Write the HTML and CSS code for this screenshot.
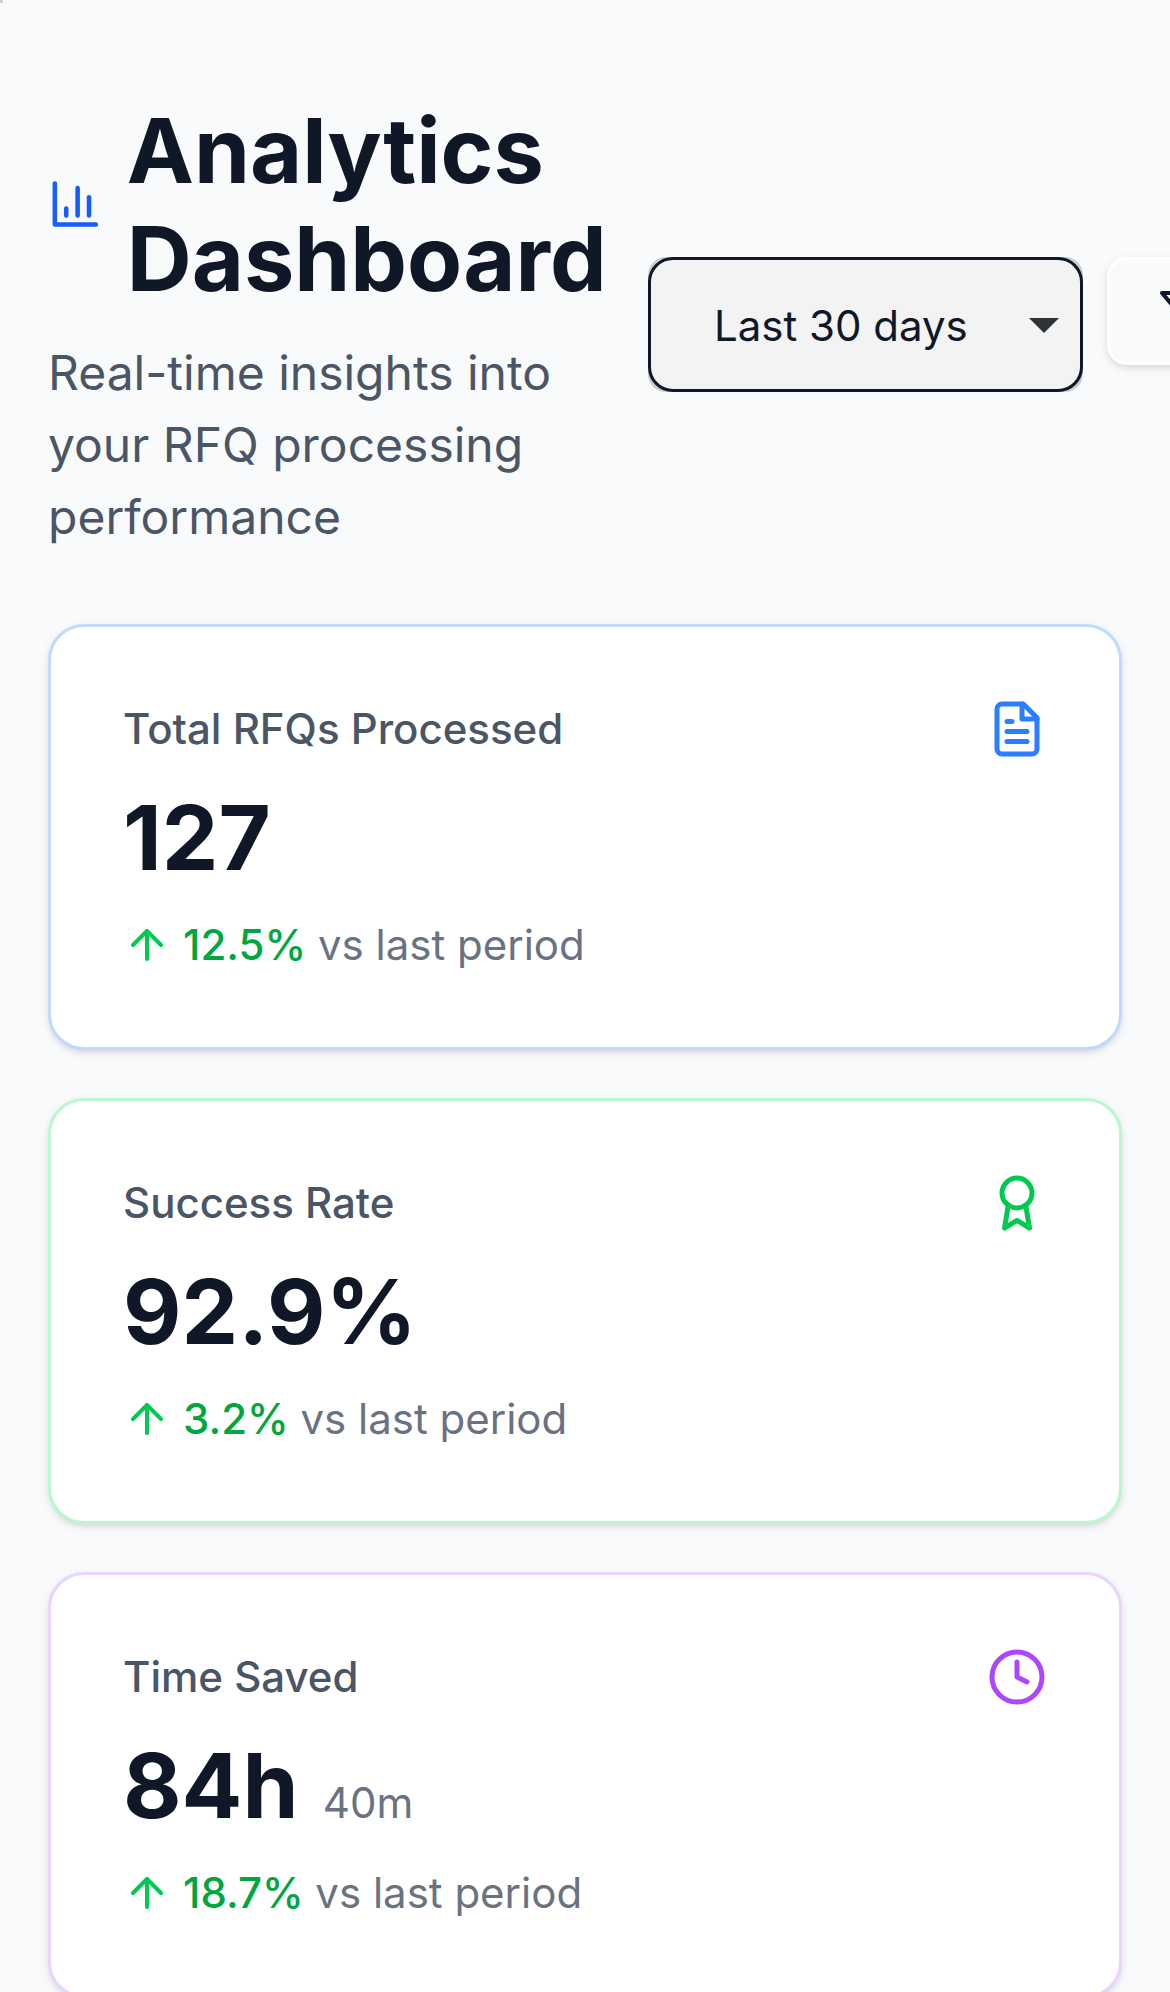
FILE: index.html
```html
<!DOCTYPE html>
<html lang="en">
<head>
<meta charset="utf-8">
<title>Analytics Dashboard</title>
<link rel="stylesheet" href="styles.css">
</head>
<body>
<span class="corner-mark"></span>
<main class="page">
  <header class="header">
    <div class="intro">
      <div class="title-row">
        <svg class="title-icon icon" viewBox="0 0 24 24"><path d="M3 3v18h18"/><path d="M18 17V9"/><path d="M13 17V5"/><path d="M8 17v-3"/></svg>
        <h1 class="title">Analytics Dashboard</h1>
      </div>
      <p class="subtitle">Real-time insights into your RFQ processing performance</p>
    </div>
    <div class="controls">
      <div class="period">
        <div class="period-box">
          <span class="period-label">Last 30 days</span>
          <svg class="period-caret" viewBox="0 0 30 15"><path d="M0 0h30L15 15z"/></svg>
        </div>
      </div>
      <button class="filter" aria-label="Filter">
        <svg class="filter-icon icon" viewBox="0 0 24 24"><path d="M22 3H2l8 9.46V19l4 2v-8.54z"/></svg>
      </button>
    </div>
  </header>
  <section class="cards">
    <article class="card card-blue">
      <div class="card-head">
        <span class="card-label">Total RFQs Processed</span>
        <svg class="card-icon icon" viewBox="0 0 24 24"><path d="M14.5 2H6a2 2 0 0 0-2 2v16a2 2 0 0 0 2 2h12a2 2 0 0 0 2-2V7.5z"/><path d="M14 2v6h6"/><path d="M16 13H8"/><path d="M16 17H8"/><path d="M10 9H8"/></svg>
      </div>
      <div class="card-value">127</div>
      <div class="trend">
        <svg class="trend-icon icon" viewBox="0 0 24 24"><path d="m5 12 7-7 7 7"/><path d="M12 19V5"/></svg>
        <span class="trend-value">12.5%</span>
        <span class="trend-note">vs last period</span>
      </div>
    </article>
    <article class="card card-green">
      <div class="card-head">
        <span class="card-label">Success Rate</span>
        <svg class="card-icon icon" viewBox="0 0 24 24"><circle cx="12" cy="8" r="6"/><path d="M15.477 12.89 17 22l-5-3-5 3 1.523-9.11"/></svg>
      </div>
      <div class="card-value">92.9%</div>
      <div class="trend">
        <svg class="trend-icon icon" viewBox="0 0 24 24"><path d="m5 12 7-7 7 7"/><path d="M12 19V5"/></svg>
        <span class="trend-value">3.2%</span>
        <span class="trend-note">vs last period</span>
      </div>
    </article>
    <article class="card card-purple">
      <div class="card-head">
        <span class="card-label">Time Saved</span>
        <svg class="card-icon icon" viewBox="0 0 24 24"><circle cx="12" cy="12" r="10"/><path d="M12 6v6l4 2"/></svg>
      </div>
      <div class="card-value">84h <span class="card-unit">40m</span></div>
      <div class="trend">
        <svg class="trend-icon icon" viewBox="0 0 24 24"><path d="m5 12 7-7 7 7"/><path d="M12 19V5"/></svg>
        <span class="trend-value">18.7%</span>
        <span class="trend-note">vs last period</span>
      </div>
    </article>
  </section>
</main>
</body>
</html>
```
FILE: styles.css
```css
* { box-sizing: border-box; }

html, body {
  margin: 0;
  height: 1992px;
  overflow: hidden;
}

body {
  background: #f9fafb;
  color: #101828;
  font-family: Inter, "Liberation Sans", sans-serif;
}

.corner-mark {
  position: absolute;
  top: 0;
  left: 0;
  width: 3px;
  height: 3px;
  background: #d1d1d1;
}

.icon {
  display: block;
  flex: none;
  fill: none;
  stroke: currentColor;
  stroke-width: 2;
  stroke-linecap: round;
  stroke-linejoin: round;
}

.page { padding: 96px 48px; }

.header {
  display: flex;
  align-items: center;
  height: 456px;
  margin-bottom: 72px;
}

.intro { flex: none; width: 600px; }

.title-row {
  display: flex;
  align-items: center;
  gap: 24px;
}

.title-icon {
  width: 54.7px;
  height: 96px;
  color: #155dfc;
}

.title {
  margin: 0 0 -1px;
  padding-top: 1px;
  font-size: 90px;
  line-height: 108px;
  font-weight: 700;
}

.subtitle {
  width: 552px;
  margin: 24px 0 0;
  padding-top: 1px;
  color: #4a5565;
  font-size: 48px;
  line-height: 72px;
}

.controls {
  display: flex;
  flex: none;
  align-items: flex-start;
  gap: 24px;
}

.period {
  width: 435px;
  height: 135px;
  border-radius: 18px;
  background: #cbcccd;
}

.period-box {
  display: flex;
  align-items: center;
  justify-content: space-between;
  height: 100%;
  padding: 3px 21px 0 63px;
  border: 3px solid #0f172a;
  border-radius: 25px;
  background: #f3f3f3;
  color: #0f172a;
}

.period-label {
  font-size: 42px;
  line-height: 60px;
}

.period-caret {
  width: 30px;
  height: 15px;
  fill: #2e3436;
}

.filter {
  flex: none;
  width: 150px;
  height: 108px;
  padding: 0 48px;
  border: 3px solid #fff;
  border-radius: 20px;
  background: #f9fafb;
  color: #0f172a;
  box-shadow: 0 3px 9px rgba(0, 0, 0, 0.1), 0 3px 6px -3px rgba(0, 0, 0, 0.1);
}

.filter-icon { width: 48px; height: 48px; }

.cards {
  display: grid;
  gap: 48px;
}

.card {
  height: 426px;
  padding: 72px;
  border: 3px solid;
  border-radius: 36px;
  background: #fff;
  box-shadow: 0 3px 9px rgba(0, 0, 0, 0.1), 0 3px 6px -3px rgba(0, 0, 0, 0.1);
}

.card-blue { border-color: #bedbff; }
.card-green { border-color: #b9f8cf; }
.card-purple { border-color: #e9d4ff; }

.card-head {
  display: flex;
  align-items: center;
  justify-content: space-between;
}

.card-label {
  color: #4a5565;
  font-size: 42px;
  line-height: 60px;
  font-weight: 500;
}

.card-icon { width: 60px; height: 60px; }
.card-blue .card-icon { color: #2b7fff; }
.card-green .card-icon { color: #00c950; }
.card-purple .card-icon { color: #ad46ff; }

.card-value {
  height: 108px;
  margin: 24px 0;
  padding-top: 1px;
  font-size: 90px;
  line-height: 108px;
  font-weight: 700;
}

.card-unit {
  margin-left: 3px;
  color: #6a7282;
  font-size: 42px;
  font-weight: 400;
}

.trend {
  display: flex;
  align-items: center;
  gap: 12px;
  font-size: 42px;
  line-height: 60px;
}

.trend-icon { width: 48px; height: 48px; color: #00c950; }
.trend-value { color: #00a63e; font-weight: 500; }
.trend-note { margin-left: -0.3px; color: #6a7282; }
```
